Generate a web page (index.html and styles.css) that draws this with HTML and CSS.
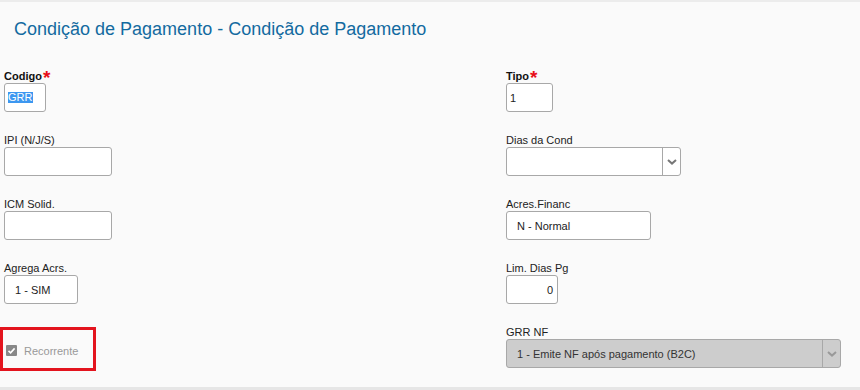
FILE: index.html
```html
<!DOCTYPE html>
<html lang="pt-BR">
<head>
<meta charset="utf-8">
<title>Condição de Pagamento</title>
<link rel="stylesheet" href="styles.css">
</head>
<body>
<div class="page">
  <h1 class="title">Condição de Pagamento - Condição de Pagamento</h1>
  <div class="form">
    <div class="field">
      <div class="label bold">Codigo<span class="req">*</span></div>
      <div class="box w-codigo pad-s"><span class="sel">GRR</span></div>
    </div>
    <div class="field">
      <div class="label bold">Tipo<span class="req">*</span></div>
      <div class="box w-tipo pad-s">1</div>
    </div>

    <div class="field">
      <div class="label">IPI (N/J/S)</div>
      <div class="box w-ipi"></div>
    </div>
    <div class="field">
      <div class="label">Dias da Cond</div>
      <div class="box select w-dias">
        <div class="select-value"></div>
        <div class="select-arrow">
          <svg width="10" height="6" viewBox="0 0 10 6"><polyline points="1,1 5,4.6 9,1" fill="none" stroke="#777" stroke-width="2"/></svg>
        </div>
      </div>
    </div>

    <div class="field">
      <div class="label">ICM Solid.</div>
      <div class="box w-ipi"></div>
    </div>
    <div class="field">
      <div class="label">Acres.Financ</div>
      <div class="box w-acres pad-l">N - Normal</div>
    </div>

    <div class="field">
      <div class="label">Agrega Acrs.</div>
      <div class="box w-agrega pad-l">1 - SIM</div>
    </div>
    <div class="field">
      <div class="label">Lim. Dias Pg</div>
      <div class="box w-lim pad-s right">0</div>
    </div>

    <div class="field">
      <div class="check-frame">
        <svg class="check" width="11" height="11" viewBox="0 0 11 11"><rect width="11" height="11" rx="1" fill="#888"/><polyline points="2.5,5.8 4.6,7.8 8.6,3.4" fill="none" stroke="#fff" stroke-width="1.6"/></svg>
        <span class="check-label">Recorrente</span>
      </div>
    </div>
    <div class="field">
      <div class="label">GRR NF</div>
      <div class="box select disabled w-grr">
        <div class="select-value pad-l">1 - Emite NF após pagamento (B2C)</div>
        <div class="select-arrow">
          <svg width="10" height="6" viewBox="0 0 10 6"><polyline points="1,1 5,4.6 9,1" fill="none" stroke="#999" stroke-width="2"/></svg>
        </div>
      </div>
    </div>
  </div>
</div>
</body>
</html>
```
FILE: styles.css
```css
html, body {
  margin: 0;
  padding: 0;
}
body {
  background: #fafafa;
  font-family: "Liberation Sans", Arial, sans-serif;
  color: #222;
}
.page {
  height: 390px;
  box-sizing: border-box;
  border-top: 2px solid #ececec;
  border-bottom: 3px solid #e6e6e6;
  overflow: hidden;
}
.title {
  margin: 16px 0 30px 14px;
  font-size: 18px;
  line-height: 22px;
  font-weight: normal;
  color: #136aa0;
}
.form {
  display: grid;
  grid-template-columns: 502px 1fr;
  row-gap: 22px;
  padding: 0 4px;
}
.field {
  display: flex;
  flex-direction: column;
  align-items: flex-start;
}
.label {
  font-size: 11px;
  line-height: 13px;
  height: 13px;
  color: #222;
  white-space: nowrap;
}
.label.bold {
  font-weight: bold;
  color: #111;
}
.req {
  color: #e8101a;
  font-size: 19px;
  line-height: 0;
  position: relative;
  top: 4px;
  margin-left: 1px;
}
.box {
  box-sizing: border-box;
  height: 29px;
  border: 1px solid #a8a8a8;
  border-radius: 3px;
  background: #fff;
  font-size: 11px;
  display: flex;
  align-items: center;
  color: #222;
}
.pad-s { padding: 0 4px 0 3px; }
.pad-l { padding-left: 10px; }
.right { justify-content: flex-end; }
.sel {
  background: #3d97f0;
  color: #fff;
  padding: 0 1px 0 0;
  line-height: 11px;
}
.w-codigo { width: 42px; }
.w-tipo { width: 47px; }
.w-ipi { width: 108px; }
.w-agrega { width: 74px; }
.w-dias { width: 175px; }
.w-acres { width: 145px; }
.w-lim { width: 52px; }
.w-grr { width: 335px; }

.select {
  align-items: stretch;
}
.select-value {
  flex: 1;
  display: flex;
  align-items: center;
}
.select-arrow {
  width: 17px;
  border-left: 1px solid #a8a8a8;
  display: flex;
  align-items: center;
  justify-content: center;
}
.select.disabled {
  background: #cdcdcd;
  color: #333;
}

.check-frame {
  box-sizing: border-box;
  width: 96px;
  height: 44px;
  margin: 1px 0 0 -4px;
  border: 3px solid #e3141e;
  display: flex;
  align-items: center;
  padding: 3px 0 0 3px;
}
.check {
  display: block;
}
.check-label {
  margin-left: 7px;
  font-size: 11px;
  color: #999;
}
```
